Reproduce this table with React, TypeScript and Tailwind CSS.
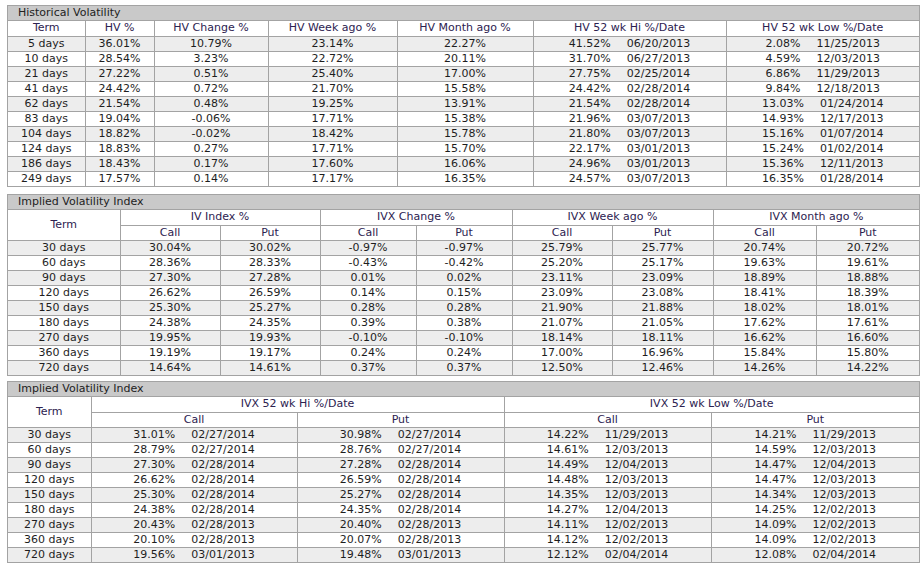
import { Fragment } from "react";

const hv = [
  ["5 days", "36.01%", "10.79%", "23.14%", "22.27%", ["41.52%", "06/20/2013"], ["2.08%", "11/25/2013"]],
  ["10 days", "28.54%", "3.23%", "22.72%", "20.11%", ["31.70%", "06/27/2013"], ["4.59%", "12/03/2013"]],
  ["21 days", "27.22%", "0.51%", "25.40%", "17.00%", ["27.75%", "02/25/2014"], ["6.86%", "11/29/2013"]],
  ["41 days", "24.42%", "0.72%", "21.70%", "15.58%", ["24.42%", "02/28/2014"], ["9.84%", "12/18/2013"]],
  ["62 days", "21.54%", "0.48%", "19.25%", "13.91%", ["21.54%", "02/28/2014"], ["13.03%", "01/24/2014"]],
  ["83 days", "19.04%", "-0.06%", "17.71%", "15.38%", ["21.96%", "03/07/2013"], ["14.93%", "12/17/2013"]],
  ["104 days", "18.82%", "-0.02%", "18.42%", "15.78%", ["21.80%", "03/07/2013"], ["15.16%", "01/07/2014"]],
  ["124 days", "18.83%", "0.27%", "17.71%", "15.70%", ["22.17%", "03/01/2013"], ["15.24%", "01/02/2014"]],
  ["186 days", "18.43%", "0.17%", "17.60%", "16.06%", ["24.96%", "03/01/2013"], ["15.36%", "12/11/2013"]],
  ["249 days", "17.57%", "0.14%", "17.17%", "16.35%", ["24.57%", "03/07/2013"], ["16.35%", "01/28/2014"]],
] as const;

const ivx = [
  ["30 days", "30.04%", "30.02%", "-0.97%", "-0.97%", "25.79%", "25.77%", "20.74%", "20.72%"],
  ["60 days", "28.36%", "28.33%", "-0.43%", "-0.42%", "25.20%", "25.17%", "19.63%", "19.61%"],
  ["90 days", "27.30%", "27.28%", "0.01%", "0.02%", "23.11%", "23.09%", "18.89%", "18.88%"],
  ["120 days", "26.62%", "26.59%", "0.14%", "0.15%", "23.09%", "23.08%", "18.41%", "18.39%"],
  ["150 days", "25.30%", "25.27%", "0.28%", "0.28%", "21.90%", "21.88%", "18.02%", "18.01%"],
  ["180 days", "24.38%", "24.35%", "0.39%", "0.38%", "21.07%", "21.05%", "17.62%", "17.61%"],
  ["270 days", "19.95%", "19.93%", "-0.10%", "-0.10%", "18.14%", "18.11%", "16.62%", "16.60%"],
  ["360 days", "19.19%", "19.17%", "0.24%", "0.24%", "17.00%", "16.96%", "15.84%", "15.80%"],
  ["720 days", "14.64%", "14.61%", "0.37%", "0.37%", "12.50%", "12.46%", "14.26%", "14.22%"],
];

const hiLow = [
  ["30 days", "31.01%", "02/27/2014", "30.98%", "02/27/2014", "14.22%", "11/29/2013", "14.21%", "11/29/2013"],
  ["60 days", "28.79%", "02/27/2014", "28.76%", "02/27/2014", "14.61%", "12/03/2013", "14.59%", "12/03/2013"],
  ["90 days", "27.30%", "02/28/2014", "27.28%", "02/28/2014", "14.49%", "12/04/2013", "14.47%", "12/04/2013"],
  ["120 days", "26.62%", "02/28/2014", "26.59%", "02/28/2014", "14.48%", "12/03/2013", "14.47%", "12/03/2013"],
  ["150 days", "25.30%", "02/28/2014", "25.27%", "02/28/2014", "14.35%", "12/03/2013", "14.34%", "12/03/2013"],
  ["180 days", "24.38%", "02/28/2014", "24.35%", "02/28/2014", "14.27%", "12/04/2013", "14.25%", "12/02/2013"],
  ["270 days", "20.43%", "02/28/2013", "20.40%", "02/28/2013", "14.11%", "12/02/2013", "14.09%", "12/02/2013"],
  ["360 days", "20.10%", "02/28/2013", "20.07%", "02/28/2013", "14.12%", "12/02/2013", "14.09%", "12/02/2013"],
  ["720 days", "19.56%", "03/01/2013", "19.48%", "03/01/2013", "12.12%", "02/04/2014", "12.08%", "02/04/2014"],
];

const cell = "border border-[#a3a3a3] p-0 h-[15px] leading-[14px] text-center whitespace-nowrap";
const head = cell + " text-[#2c2250]";
const stripe = (i: number) => (i % 2 === 0 ? "bg-[#ededed]" : "bg-white");

function Pair({ v, d }: { v: string; d: string }) {
  return (
    <>
      <span>{v}</span>
      <span className="ml-4">{d}</span>
    </>
  );
}

function Panel({ title, children }: { title: string; children: React.ReactNode }) {
  return (
    <div className="ml-[7px] w-[913px] border border-[#a3a3a3] bg-white">
      <div className="h-[15px] border-b border-[#a3a3a3] bg-[#c9c9c9] pl-[10px] leading-[14px] text-[#222]">
        {title}
      </div>
      <table className="w-full table-fixed border-collapse border-hidden">{children}</table>
    </div>
  );
}

export default function App() {
  return (
    <main
      className="min-h-screen bg-white pt-[5px] text-[11px] text-[#1e1e1e]"
      style={{ fontFamily: '"DejaVu Sans", Verdana, sans-serif' }}
    >
      {/* Historical volatility */}
      <Panel title="Historical Volatility">
        <colgroup>
          <col className="w-[77px]" />
          <col className="w-[69px]" />
          <col className="w-[114px]" />
          <col className="w-[129px]" />
          <col className="w-[136px]" />
          <col className="w-[193px]" />
          <col className="w-[193px]" />
        </colgroup>
        <tbody>
          <tr>
            <td className={head}>Term</td>
            <td className={head}>HV %</td>
            <td className={head}>HV Change %</td>
            <td className={head}>HV Week ago %</td>
            <td className={head}>HV Month ago %</td>
            <td className={head}>HV 52 wk Hi %/Date</td>
            <td className={head}>HV 52 wk Low %/Date</td>
          </tr>
          {hv.map((r, i) => (
            <tr key={r[0]} className={stripe(i)}>
              <td className={cell}>{r[0]}</td>
              <td className={cell}>{r[1]}</td>
              <td className={cell}>{r[2]}</td>
              <td className={cell}>{r[3]}</td>
              <td className={cell}>{r[4]}</td>
              <td className={cell}>
                <Pair v={r[5][0]} d={r[5][1]} />
              </td>
              <td className={cell}>
                <Pair v={r[6][0]} d={r[6][1]} />
              </td>
            </tr>
          ))}
        </tbody>
      </Panel>

      {/* IVX */}
      <div className="mt-[7px]">
        <Panel title="Implied Volatility Index">
          <colgroup>
            <col className="w-[112px]" />
            <col className="w-[100px]" />
            <col className="w-[100px]" />
            <col className="w-[96px]" />
            <col className="w-[96px]" />
            <col className="w-[100px]" />
            <col className="w-[101px]" />
            <col className="w-[103px]" />
            <col className="w-[103px]" />
          </colgroup>
          <tbody>
            <tr>
              <td rowSpan={2} className={head}>Term</td>
              <td colSpan={2} className={head}>IV Index %</td>
              <td colSpan={2} className={head}>IVX Change %</td>
              <td colSpan={2} className={head}>IVX Week ago %</td>
              <td colSpan={2} className={head}>IVX Month ago %</td>
            </tr>
            <tr>
              {[0, 1, 2, 3].map((k) => (
                <Fragment key={k}>
                  <td className={head}>Call</td>
                  <td className={head}>Put</td>
                </Fragment>
              ))}
            </tr>
            {ivx.map((r, i) => (
              <tr key={r[0]} className={stripe(i)}>
                {r.map((v, j) => (
                  <td key={j} className={cell}>{v}</td>
                ))}
              </tr>
            ))}
          </tbody>
        </Panel>
      </div>

      {/* IVX 52 week hi / low */}
      <div className="mt-[5px]">
        <Panel title="Implied Volatility Index">
          <colgroup>
            <col className="w-[83px]" />
            <col className="w-[206px]" />
            <col className="w-[207px]" />
            <col className="w-[207px]" />
            <col className="w-[208px]" />
          </colgroup>
          <tbody>
            <tr>
              <td rowSpan={2} className={head}>Term</td>
              <td colSpan={2} className={head}>IVX 52 wk Hi %/Date</td>
              <td colSpan={2} className={head}>IVX 52 wk Low %/Date</td>
            </tr>
            <tr>
              <td className={head}>Call</td>
              <td className={head}>Put</td>
              <td className={head}>Call</td>
              <td className={head}>Put</td>
            </tr>
            {hiLow.map((r, i) => (
              <tr key={r[0]} className={stripe(i)}>
                <td className={cell}>{r[0]}</td>
                <td className={cell}>
                  <Pair v={r[1]} d={r[2]} />
                </td>
                <td className={cell}>
                  <Pair v={r[3]} d={r[4]} />
                </td>
                <td className={cell}>
                  <Pair v={r[5]} d={r[6]} />
                </td>
                <td className={cell}>
                  <Pair v={r[7]} d={r[8]} />
                </td>
              </tr>
            ))}
          </tbody>
        </Panel>
      </div>
    </main>
  );
}
